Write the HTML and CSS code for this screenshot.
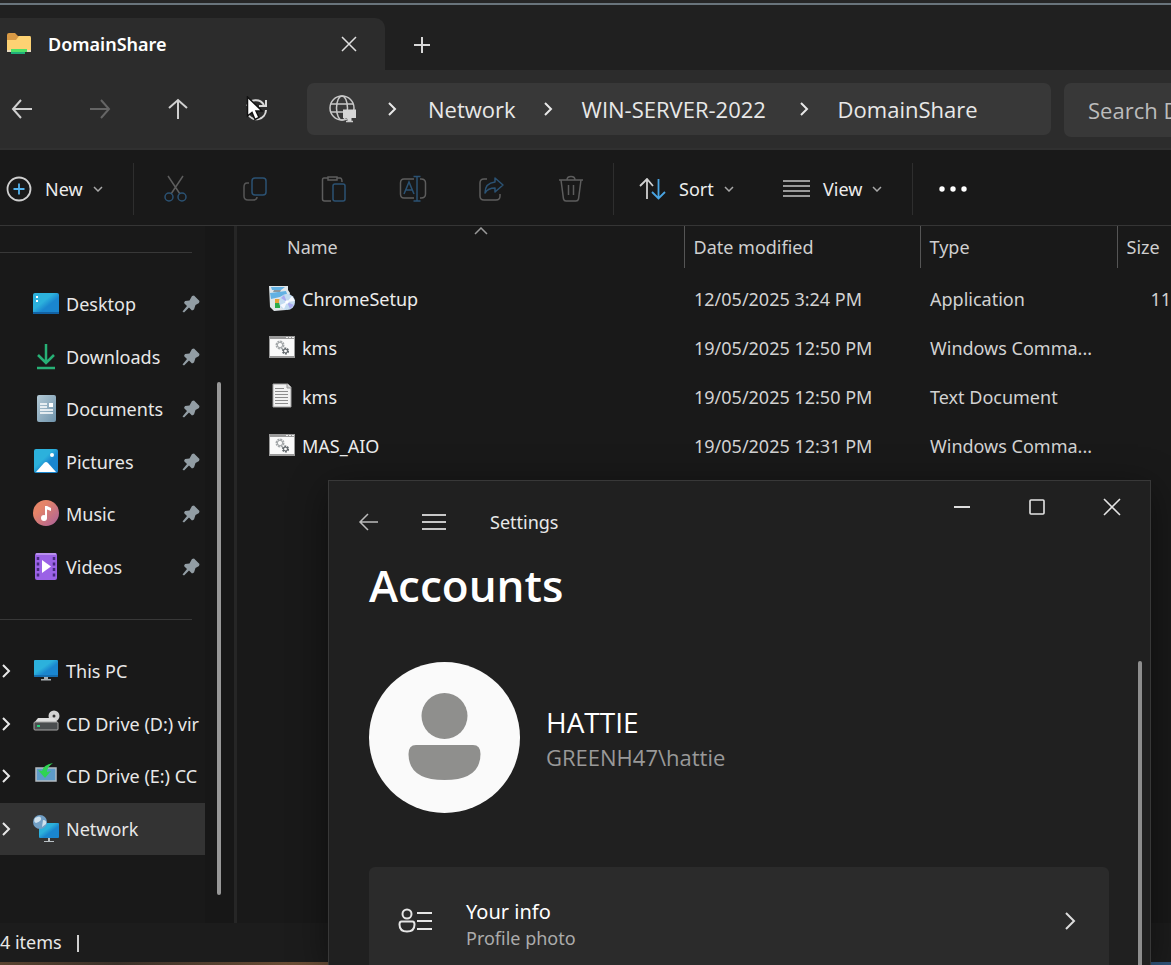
FILE: index.html
```html
<!DOCTYPE html>
<html lang="en">

<head>
  <meta charset="utf-8">
  <title>DomainShare</title>
  <meta name="viewport" content="width=device-width, initial-scale=1">
  <link rel="stylesheet" href="styles.css">
</head>
<body>

  <!-- shared symbols -->
  <svg class="defs" aria-hidden="true">
    <defs>
      <linearGradient id="blue" x1="0" y1="0" x2="1" y2="1">
        <stop offset="0.4" stop-color="#2cb1dc"/>
        <stop offset="0.6" stop-color="#1a86cf"/>
      </linearGradient>
      <linearGradient id="music" x1="0" y1="0" x2="1" y2="1">
        <stop offset="0.3" stop-color="#e58468"/>
        <stop offset="1" stop-color="#a9609c"/>
      </linearGradient>
      <linearGradient id="doc" x1="0" y1="0" x2="1" y2="1">
        <stop offset="0" stop-color="#b4cad6"/>
        <stop offset="1" stop-color="#6f93ab"/>
      </linearGradient>
      <symbol id="pin" viewBox="0 0 18 18">
        <path d="M10 1 12 .5 17.500 6 17 8 13.500 10 12 14.500 10 15.500 7 12.500 2 17.500 .5 16.500 5 11 2 8 3 6 7.500 5.500z" fill="#929da4"/>
      </symbol>
      <symbol id="right" viewBox="0 0 10 16">
        <path d="M2 2 8 8 2 14" fill="none" stroke="currentColor" stroke-width="2"/>
      </symbol>
      <symbol id="down" viewBox="0 0 10 6">
        <path d="M1 1 5 5 9 1" fill="none" stroke="currentColor" stroke-width="1.500"/>
      </symbol>
      <symbol id="script" viewBox="0 0 26 22">
        <path d="M0 0H26V22H0z" fill="#9a9a9a"/>
        <path d="M1 3H25V20H1z" fill="#fafafa"/>
        <path d="M17 1.500h2m1 0h2m1 0h2" stroke="#eee"/>
        <circle cx="11" cy="9" r="3.500" fill="none" stroke="#a4a8aa" stroke-width="2" stroke-dasharray="2 .7"/>
        <circle cx="11" cy="9" r="2.600" fill="none" stroke="#a4a8aa"/>
        <circle cx="16.500" cy="15" r="2.600" fill="none" stroke="#62686c" stroke-width="2" stroke-dasharray="1.800 .9"/>
        <circle cx="16.500" cy="15" r="2" fill="none" stroke="#62686c"/>
      </symbol>
    </defs>
  </svg>

  <div class="explorer">
    <!-- tabs -->
    <header class="titlebar">
      <div class="tab">
        <svg class="folder" width="26" height="24" viewBox="0 0 26 24"><path d="M1 3Q1 1 3 1H9L12 4H24V10H1z" fill="#d99a45"/><path d="M1 8H10L13 4H24Q25 4 25 6V20H1z" fill="#fdd273"/><path d="M1 18h24v2H1z" fill="#e6d9c0"/><path d="M5 17H21V20H5z" fill="#4fe269"/><path d="M5 20H19V22H5z" fill="#1fb07a"/></svg>
        <span class="tab-name">DomainShare</span>
        <button class="icon-btn" aria-label="Close tab"><svg width="16" height="16"><path d="M1 1 15 15M15 1 1 15" stroke="#e0e0e0" stroke-width="1.500"/></svg></button>
      </div>
      <button class="icon-btn new-tab" aria-label="New tab"><svg width="18" height="18"><path d="M9 1V17M1 9H17" stroke="#d8d8d8" stroke-width="2"/></svg></button>
    </header>

    <!-- address row -->
    <nav class="navbar">
      <div class="nav-buttons">
        <button class="icon-btn" aria-label="Back"><svg width="22" height="20"><path d="M10 1 2 10 10 19M2 10H21" fill="none" stroke="#d0d0d0" stroke-width="2"/></svg></button>
        <button class="icon-btn" aria-label="Forward" disabled><svg width="22" height="20"><path d="M12 1 20 10 12 19M20 10H1" fill="none" stroke="#656565" stroke-width="2"/></svg></button>
        <button class="icon-btn" aria-label="Up"><svg width="20" height="22"><path d="M1 10 10 2 19 10M10 2V21" fill="none" stroke="#d0d0d0" stroke-width="2"/></svg></button>
        <button class="icon-btn refresh" aria-label="Refresh">
          <svg width="24" height="24"><path d="M3 9A9.500 9.500 0 0 1 20 8M22 3V9H15M22 13A9.500 9.500 0 0 1 4 17" fill="none" stroke="#d8d8d8" stroke-width="2"/></svg>
          <svg class="cursor" width="18" height="26"><path d="M1.500 1V20L6 16.500 9 23.500 13 21.500 10 15H16z" fill="#fff" stroke="#111" stroke-width="1.500"/></svg>
        </button>
      </div>
      <div class="address">
        <svg class="globe" width="28" height="28" fill="none" stroke="#c8c8c8" stroke-width="1.500"><circle cx="13" cy="13" r="12"/><ellipse cx="13" cy="13" rx="5.500" ry="12"/><path d="M2 9H24M2 17H24"/><path d="M14 14.500H27V23H22.500V26.500H18.500V23H14z" fill="#d6d6d6" stroke="none"/><path d="M17 26.500H24"/></svg>
        <svg class="crumb-sep first" width="10" height="16"><use href="#right"/></svg>
        <a class="crumb network" href="#">Network</a>
        <svg class="crumb-sep" width="10" height="16"><use href="#right"/></svg>
        <a class="crumb server" href="#">WIN-SERVER-2022</a>
        <svg class="crumb-sep" width="10" height="16"><use href="#right"/></svg>
        <a class="crumb" href="#">DomainShare</a>
      </div>
      <input class="search" type="text" aria-label="Search DomainShare" placeholder="Search DomainShare">
    </nav>

    <!-- commands -->
    <div class="toolbar">
      <button class="cmd new"><svg width="26" height="26" fill="none"><circle cx="13" cy="13" r="11.500" stroke="#cfcfcf" stroke-width="1.800"/><path d="M13 7.500V18.500M7.500 13H18.500" stroke="#55b3ee" stroke-width="1.800"/></svg><span>New</span><svg width="10" height="6"><use href="#down"/></svg></button>
      <div class="cmd-group">
        <button class="icon-btn" aria-label="Cut" disabled><svg width="26" height="28" fill="none" stroke-width="1.500"><path d="M5 1 17 19M20 1 8 19" stroke="#5d5d5d"/><circle cx="6" cy="22" r="4" stroke="#2b5273"/><circle cx="19" cy="22" r="4" stroke="#2b5273"/></svg></button>
        <button class="icon-btn" aria-label="Copy" disabled><svg width="26" height="26" fill="none" stroke-width="1.500"><path d="M7 7H5Q2 7 2 11V20Q2 24 6 24H11Q15 24 15 21" stroke="#565656"/><rect x="10" y="2" width="14" height="17" rx="3" stroke="#2b5273"/></svg></button>
        <button class="icon-btn" aria-label="Paste" disabled><svg width="26" height="28" fill="none" stroke-width="1.500"><path d="M7 3H3Q1.500 3 1.500 5V24Q1.500 26 3.500 26H10M16 3H19Q21 3 21 7M7 2H16V5H7z" stroke="#5d5d5d"/><rect x="12" y="9" width="12" height="17" rx="2" stroke="#2b5273"/></svg></button>
        <button class="icon-btn" aria-label="Rename" disabled><svg width="28" height="28" fill="none" stroke-width="1.500"><path d="M15 4H5Q1.500 4 1.500 8V19Q1.500 23 5 23H15M21 4H22Q26.500 4 26.500 8V19Q26.500 23 22 23H21" stroke="#5d5d5d"/><path d="M5 19 10 7 15 19M7 15H13M14.500 1.500H21.500M18 1.500V26M14.500 26H21.500" stroke="#2b5273"/></svg></button>
        <button class="icon-btn" aria-label="Share" disabled><svg width="28" height="26" fill="none" stroke-width="1.500"><path d="M9 3H6Q2 3 2 7V20Q2 24 6 24H18Q22 24 22 20V18" stroke="#5d5d5d"/><path d="M17 2 25 9 17 16V12Q10 12 7 17 7 7 17 6z" stroke="#2b5273" stroke-linejoin="round"/></svg></button>
        <button class="icon-btn" aria-label="Delete" disabled><svg width="26" height="28" fill="none" stroke="#5d5d5d" stroke-width="1.500"><path d="M1 5H25M9 5Q9 1.500 13 1.500T17 5M3 5 5.500 24Q6 26 8 26H18Q20 26 20.500 24L23 5M10.500 10V20M15.500 10V20"/></svg></button>
      </div>
      <button class="cmd sort"><svg width="27" height="22" fill="none" stroke-width="1.800"><path d="M1 8 8 1 14 8M8 1V21" stroke="#d0d0d0"/><path d="M13 14 19.500 20.500 26 14M19.500 20V1" stroke="#49a4e2"/></svg><span>Sort</span><svg width="10" height="6"><use href="#down"/></svg></button>
      <button class="cmd view"><svg width="27" height="20"><path d="M0 2H27M0 7H27M0 12H27M0 17H27" stroke="#c4c4c4" stroke-width="1.600"/></svg><span>View</span><svg width="10" height="6"><use href="#down"/></svg></button>
      <button class="icon-btn more" aria-label="See more"><svg width="28" height="6" fill="#fff"><circle cx="3" cy="3" r="2.700"/><circle cx="14" cy="3" r="2.700"/><circle cx="25" cy="3" r="2.700"/></svg></button>
    </div>

    <div class="content">
      <!-- navigation pane -->
      <aside class="sidebar">
        <div class="tree">
          <hr>
          <ul class="quick">
            <li><svg class="icon" width="28" height="28"><rect x="1" y="3" width="26" height="21" rx="2" fill="url(#blue)"/><path d="M1 22H27V24H1z" fill="#1262a4"/><path d="M4 6h2v2H4zM4 10h2v2H4z" fill="#fff"/></svg><a href="#">Desktop</a><svg class="pin" width="18" height="18"><use href="#pin"/></svg></li>
            <li><svg class="icon" width="28" height="28" fill="none" stroke="#27b176" stroke-width="2.500"><path d="M14 1V19M6 12 14 20 22 12M5 25H23"/></svg><a href="#">Downloads</a><svg class="pin" width="18" height="18"><use href="#pin"/></svg></li>
            <li><svg class="icon" width="28" height="28"><rect x="5" y="0" width="19" height="27" rx="2" fill="url(#doc)"/><path d="M8 9h7M8 12h7M8 15h13M8 18h13" stroke="#fff" stroke-width="1.500"/><path d="M17 8h4v4h-4z" fill="#fff"/></svg><a href="#">Documents</a><svg class="pin" width="18" height="18"><use href="#pin"/></svg></li>
            <li><svg class="icon" width="28" height="28"><rect x="2" y="1" width="24" height="24" rx="2" fill="url(#blue)"/><path d="M4 24 12 15Q14 13 16 15L24 24z" fill="#fff"/><circle cx="20" cy="7" r="2" fill="#fff"/></svg><a href="#">Pictures</a><svg class="pin" width="18" height="18"><use href="#pin"/></svg></li>
            <li><svg class="icon" width="28" height="28"><circle cx="14" cy="13" r="13" fill="url(#music)"/><circle cx="12" cy="18" r="3" fill="#fff"/><path d="M13 18V6H15L19 8V11L15 9.500V18z" fill="#fff"/></svg><a href="#">Music</a><svg class="pin" width="18" height="18"><use href="#pin"/></svg></li>
            <li><svg class="icon" width="28" height="28"><rect x="3" y="0" width="22" height="27" rx="2" fill="#9b62e6"/><path d="M4 1H24" stroke="#d5bdf7"/><path d="M6 4V25M22 4V25" stroke="#45287c" stroke-width="2.500" stroke-dasharray="3 2.500"/><path d="M10 7 19 13.500 10 20z" fill="#fff"/></svg><a href="#">Videos</a><svg class="pin" width="18" height="18"><use href="#pin"/></svg></li>
          </ul>
          <hr>
          <ul class="places">
            <li><svg class="chevron" width="10" height="16"><use href="#right"/></svg><svg class="icon" width="28" height="28"><rect x="2" y="3" width="24" height="17" rx="1" fill="url(#blue)"/><path d="M2 19H26" stroke="#1465a4" stroke-width="1.500"/><path d="M12 20h4v2h3v1.500H9V22h3z" fill="#a9b0b4"/></svg><a href="#">This PC</a></li>
            <li><svg class="chevron" width="10" height="16"><use href="#right"/></svg><svg class="icon" width="28" height="28"><circle cx="22" cy="6" r="5.500" fill="#d3d3d3"/><circle cx="22" cy="6" r="1.500" fill="#333"/><path d="M6 8H22L26 13H2z" fill="#dedede"/><rect x="2" y="12" width="24" height="8" rx="1" fill="#4a4d4f" stroke="#a5a5a5"/><path d="M5 16h3" stroke="#25cf7a" stroke-width="2"/></svg><a href="#">CD Drive (D:) vir</a></li>
            <li><svg class="chevron" width="10" height="16"><use href="#right"/></svg><svg class="icon" width="28" height="28"><rect x="4" y="6" width="20" height="13" fill="#5d9bc9" stroke="#b3bbc1" stroke-width="1.500"/><path d="M21 1Q11 3 10 9L6 8 13 16 19 9 15 10Q15 5 21 1z" fill="#2fd354"/></svg><a href="#">CD Drive (E:) CC</a></li>
            <li class="selected"><svg class="chevron" width="10" height="16"><use href="#right"/></svg><svg class="icon" width="28" height="28"><rect x="7" y="8" width="20" height="15" rx="1" fill="url(#blue)"/><path d="M16 23h2v3h4v1H12v-1h4z" fill="#b9c0c4"/><circle cx="8" cy="7" r="7" fill="#719fc5"/><path d="M3 3Q8 0 9 3T4 8Q1 7 3 3zM11 5Q15 5 14 9L10 12z" fill="#cfe1ee"/></svg><a href="#">Network</a></li>
          </ul>
        </div>
        <div class="track"><div class="thumb"></div></div>
      </aside>

      <!-- file list -->
      <main class="files">
        <table>
          <colgroup>
            <col class="col-name"><col class="col-date"><col class="col-type"><col>
          </colgroup>
          <thead>
            <tr>
              <th class="sorted">Name<svg class="sort-mark" width="14" height="8"><path d="M1 7 7 1 13 7" fill="none" stroke="#999" stroke-width="1.500"/></svg></th>
              <th>Date modified</th>
              <th>Type</th>
              <th>Size</th>
            </tr>
          </thead>
          <tbody>
            <tr>
              <td><div class="file"><svg width="28" height="28"><path d="M1 1 20 1 20 5 22 8 18 25 6 26 2 22z" fill="#dfe6ea"/><path d="M3 2 17 2 13 5 4 5zM2 8 18 6 19 9 12 12 3 14z" fill="#62b1e3"/><path d="M6 5 13 5 12 7 5 7z" fill="#8b979e"/><path d="M7 14h5v4H7z" fill="#e6a23a"/><path d="M7 18h5v5H7z" fill="#2bab4c"/><circle cx="19" cy="17" r="8" fill="#c3dcf1"/><path d="M19 17 24 11 27 16zM19 17 12 20 16 24z" fill="#f6f9ff"/><path d="M19 17 22 24 26 20zM19 17 13 13 16 10z" fill="#a9abf0"/><circle cx="19" cy="17" r="1.800" fill="#fff"/></svg><span>ChromeSetup</span></div></td>
              <td>12/05/2025 3:24 PM</td>
              <td>Application</td>
              <td class="size">11</td>
            </tr>
            <tr>
              <td><div class="file"><svg width="28" height="24" viewBox="-1 0 28 24"><use href="#script" width="26" height="22"/></svg><span>kms</span></div></td>
              <td>19/05/2025 12:50 PM</td>
              <td>Windows Comma...</td>
              <td></td>
            </tr>
            <tr>
              <td><div class="file"><svg width="28" height="28"><path d="M5 1H20L23 4V24H5z" fill="#f2f2f2" stroke="#a0a0a0"/><path d="M19 1V5H23" fill="#ccc" stroke="#999"/><path d="M7 5.500h9M7 8.500h13M7 11.500h13M7 14.500h13M7 17.500h13M7 20.500h13" stroke="#8d8d8d"/></svg><span>kms</span></div></td>
              <td>19/05/2025 12:50 PM</td>
              <td>Text Document</td>
              <td></td>
            </tr>
            <tr>
              <td><div class="file"><svg width="28" height="24" viewBox="-1 0 28 24"><use href="#script" width="26" height="22"/></svg><span>MAS_AIO</span></div></td>
              <td>19/05/2025 12:31 PM</td>
              <td>Windows Comma...</td>
              <td></td>
            </tr>
          </tbody>
        </table>
      </main>
    </div>

    <footer class="status">4 items</footer>
  </div>

  <!-- settings window -->
  <section class="settings">
    <header class="settings-bar">
      <div class="settings-left">
        <button class="icon-btn" aria-label="Back"><svg width="20" height="18"><path d="M10 1 2 9 10 17M2 9H20" fill="none" stroke="#bbb" stroke-width="1.500"/></svg></button>
        <button class="icon-btn" aria-label="Menu"><svg width="26" height="18"><path d="M1 2H25M1 9H25M1 16H25" stroke="#c8c8c8" stroke-width="1.800"/></svg></button>
        <span>Settings</span>
      </div>
      <div class="controls">
        <button aria-label="Minimize"><svg width="18" height="18"><path d="M1 9H17" stroke="#ddd" stroke-width="2"/></svg></button>
        <button aria-label="Maximize"><svg width="18" height="18"><rect x="2" y="2" width="14" height="14" rx="1" fill="none" stroke="#e4e4e4" stroke-width="1.600"/></svg></button>
        <button aria-label="Close"><svg width="18" height="18"><path d="M1 1 17 17M17 1 1 17" stroke="#e4e4e4" stroke-width="1.600"/></svg></button>
      </div>
    </header>
    <div class="settings-body">
      <div class="page">
        <h1>Accounts</h1>
        <div class="profile">
          <svg width="151" height="151" viewBox="0 0 151 151"><circle cx="75.500" cy="75.500" r="75.500" fill="#fafafa"/><circle cx="75.500" cy="54" r="23" fill="#8f8f8d"/><path d="M47 83H104Q111.500 83 111.500 92Q111.500 118 75.500 118T39.500 92Q39.500 83 47 83z" fill="#8f8f8d"/></svg>
          <div>
            <p class="name">HATTIE</p>
            <p class="account">GREENH47\hattie</p>
          </div>
        </div>
        <a class="card" href="#">
          <svg width="36" height="26" fill="none" stroke="#e6e6e6" stroke-width="2"><circle cx="10" cy="6" r="4.500"/><path d="M4.500 13.500H15.500Q17.500 13.500 17.500 16.500Q17.500 23.500 10 23.500T2.500 16.500Q2.500 13.500 4.500 13.500zM20 5H35M20 13H35M20 21H35"/></svg>
          <span class="card-text"><span class="card-title">Your info</span><span class="card-sub">Profile photo</span></span>
          <svg width="12" height="20"><path d="M2 2 10 10 2 18" fill="none" stroke="#ddd" stroke-width="2"/></svg>
        </a>
      </div>
      <div class="settings-thumb"></div>
    </div>
  </section>

</body>
</html>
```
FILE: styles.css
```css
* {
  box-sizing: border-box;
}
body {
  margin: 0;
  height: 100vh;
  position: relative;
  overflow: hidden;
  background: linear-gradient(90deg, #5a4330 0, #3a3029 10%, #6b4d35 25%, #2f5278 90%);
  color: #e8e8e8;
  font-family: "Noto Sans", "Open Sans", sans-serif;
  font-size: 18px;
  line-height: 24px;
}
.defs {
  position: absolute;
  width: 0;
  height: 0;
}
button {
  padding: 0;
  border: 0;
  background: none;
  color: inherit;
  font: inherit;
}
a {
  color: inherit;
  text-decoration: none;
}
svg {
  display: block;
  flex: none;
}
.icon-btn {
  display: flex;
  align-items: center;
  justify-content: center;
  flex: none;
  width: 44px;
  height: 44px;
}

/* explorer window, the desktop shows below it */
.explorer {
  display: flex;
  flex-direction: column;
  height: calc(100% - 3px);
  background: #191919;
  border-top: 3px solid #262626;
}
.titlebar {
  display: flex;
  align-items: flex-end;
  height: 67px;
  background: #202020;
  border-top: 2px solid #69747c;
}
.tab {
  display: flex;
  align-items: center;
  width: 385px;
  height: 52px;
  padding: 0 14px 0 6px;
  background: #2c2c2c;
  border-radius: 0 10px 0 0;
}
.tab-name {
  flex: 1;
  margin-left: 16px;
  color: #fff;
  font-weight: 600;
}
.new-tab {
  margin: 0 0 3px 15px;
}

.navbar {
  display: flex;
  align-items: flex-start;
  height: 80px;
  padding-top: 13px;
  background: #2c2c2c;
  border-bottom: 2px solid #303030;
}
.nav-buttons {
  display: flex;
  gap: 34px;
  margin: 4px 29px 0 0;
}
.refresh {
  position: relative;
}
.cursor {
  position: absolute;
  left: 12px;
  top: 9px;
}
.address {
  display: flex;
  align-items: center;
  flex: 1;
  height: 52px;
  margin-right: 13px;
  padding-left: 22px;
  background: #383838;
  border-radius: 7px;
  font-family: "Open Sans", "Noto Sans", sans-serif;
  font-size: 22px;
}
.server {
  min-width: 190px;
}
.crumb-sep {
  margin: 0 29px 0 27px;
}
.crumb-sep.first {
  margin: 0 31px 0 30px;
}
.search {
  width: 107px;
  height: 54px;
  padding: 0 0 0 24px;
  border: 0;
  border-radius: 7px 0 0 7px;
  background: #383838;
  color: #fff;
  font-family: "Open Sans", "Noto Sans", sans-serif;
  font-size: 22px;
}
.search::placeholder {
  color: #bcbcbc;
  opacity: 1;
}

.toolbar {
  display: flex;
  align-items: center;
  height: 76px;
  padding-top: 2px;
  border-bottom: 1px solid #353535;
}
.cmd {
  display: flex;
  align-items: center;
  color: #ececec;
}
.cmd svg:last-child {
  margin-left: 10px;
  color: #a8a8a8;
}
.cmd.new {
  width: 133px;
  padding-left: 6px;
}
.cmd span {
  margin-left: 13px;
}
.cmd-group {
  display: flex;
  justify-content: space-between;
  align-items: center;
  width: 481px;
  height: 52px;
  padding: 0 20px;
  border: solid #2e2e2e;
  border-width: 0 1px;
}
.sort {
  width: 144px;
  margin-left: 25px;
}
.view {
  width: 130px;
  height: 52px;
  border-right: 1px solid #2e2e2e;
}
.more {
  margin-left: 18px;
}

.content {
  display: flex;
  flex: 1;
  min-height: 0;
}
.sidebar {
  display: flex;
  flex: none;
  width: 237px;
  border-right: 3px solid #262626;
}
.tree {
  flex: none;
  width: 205px;
}
hr {
  height: 1px;
  margin: 26px 13px 25px 0;
  border: 0;
  background: #383838;
}
.tree ul {
  display: grid;
  grid-auto-rows: 1fr;
  margin: 0;
  padding: 0;
  list-style: none;
}
.quick {
  height: 315px;
}
.places {
  height: 210px;
}
.tree li {
  display: flex;
  align-items: center;
  overflow: hidden;
  padding-left: 32px;
  white-space: nowrap;
}
.tree a {
  flex: 1;
  margin-left: 6px;
}
.pin {
  margin-right: 5px;
}
.tree .places li {
  padding-left: 1px;
}
.chevron {
  margin-right: 21px;
}
.selected {
  background: #333;
}
.track {
  display: flex;
  flex: 1;
  padding: 156px 0 28px 12px;
  background: #171717;
}
.thumb {
  width: 4px;
  border-radius: 2px;
  background: #989898;
}

.files {
  flex: 1;
  min-width: 0;
}
table {
  width: 100%;
  table-layout: fixed;
  border-collapse: collapse;
}
.col-name {
  width: 447px;
}
.col-date {
  width: 236px;
}
.col-type {
  width: 197px;
}
th {
  height: 42px;
  padding: 0 0 0 9px;
  border-left: 1px solid #555;
  color: #cfcfcf;
  font-weight: 400;
  text-align: left;
}
th.sorted {
  position: relative;
  padding-left: 50px;
  border-left: 0;
}
.sort-mark {
  position: absolute;
  left: 237px;
  top: 1px;
}
tbody::before {
  content: "";
  display: block;
  height: 6px;
}
td {
  height: 49px;
  padding: 0 0 0 10px;
  color: #d2d2d2;
  white-space: nowrap;
}
td:first-child {
  padding-left: 31px;
  color: #ececec;
}
td.size {
  padding: 0;
  text-align: right;
}
.file {
  display: flex;
  align-items: center;
  gap: 6px;
}
.status {
  flex: none;
  height: 39px;
  padding-top: 7px;
  background: #1c1c1c;
}
.status::after {
  content: "";
  display: inline-block;
  width: 2px;
  height: 17px;
  margin-left: 15px;
  background: #d0d0d0;
  vertical-align: -3px;
}

/* settings window */
.settings {
  position: absolute;
  left: 328px;
  right: 20px;
  top: 480px;
  bottom: 0;
  display: flex;
  flex-direction: column;
  background: #202020;
  border: 1px solid #383838;
  border-bottom: 0;
  box-shadow: 0 8px 36px rgba(0, 0, 0, 0.45);
}
.settings-bar {
  display: flex;
  justify-content: space-between;
  height: 74px;
}
.settings-left {
  display: flex;
  align-items: center;
  height: 82px;
  padding-left: 17px;
  gap: 22px;
}
.settings-left span {
  margin-left: 12px;
}
.controls {
  display: flex;
  height: 52px;
}
.controls button {
  display: flex;
  align-items: center;
  justify-content: center;
  width: 75px;
}
.controls button:last-child {
  margin-right: 1px;
}
.settings-body {
  display: flex;
  flex: 1;
  min-height: 0;
  overflow: hidden;
}
.page {
  flex: 1;
  padding: 0 29px 0 40px;
  font-family: "Open Sans", "Noto Sans", sans-serif;
}
h1 {
  margin: 0 0 47px;
  color: #fff;
  font-size: 44px;
  font-weight: 600;
  line-height: 60px;
}
.profile {
  display: flex;
  align-items: center;
  gap: 26px;
  margin-bottom: 54px;
}
.profile p {
  margin: 0;
}
.name {
  color: #fff;
  font-size: 28px;
  line-height: 38px;
}
.account {
  color: #999;
  font-size: 22px;
  line-height: 32px;
}
.card {
  display: flex;
  align-items: center;
  height: 108px;
  padding: 0 33px 0 28px;
  background: #2b2b2b;
  border-radius: 6px;
  font-family: "Noto Sans", "Open Sans", sans-serif;
}
.card-text {
  display: flex;
  flex: 1;
  flex-direction: column;
  margin: 6px 0 0 33px;
}
.card-title {
  color: #fff;
  font-size: 20px;
  line-height: 28px;
}
.card-sub {
  color: #ababab;
}
.settings-thumb {
  width: 4px;
  margin: 106px 8px 0 0;
  border-radius: 2px 2px 0 0;
  background: #8e8e8e;
}
```
